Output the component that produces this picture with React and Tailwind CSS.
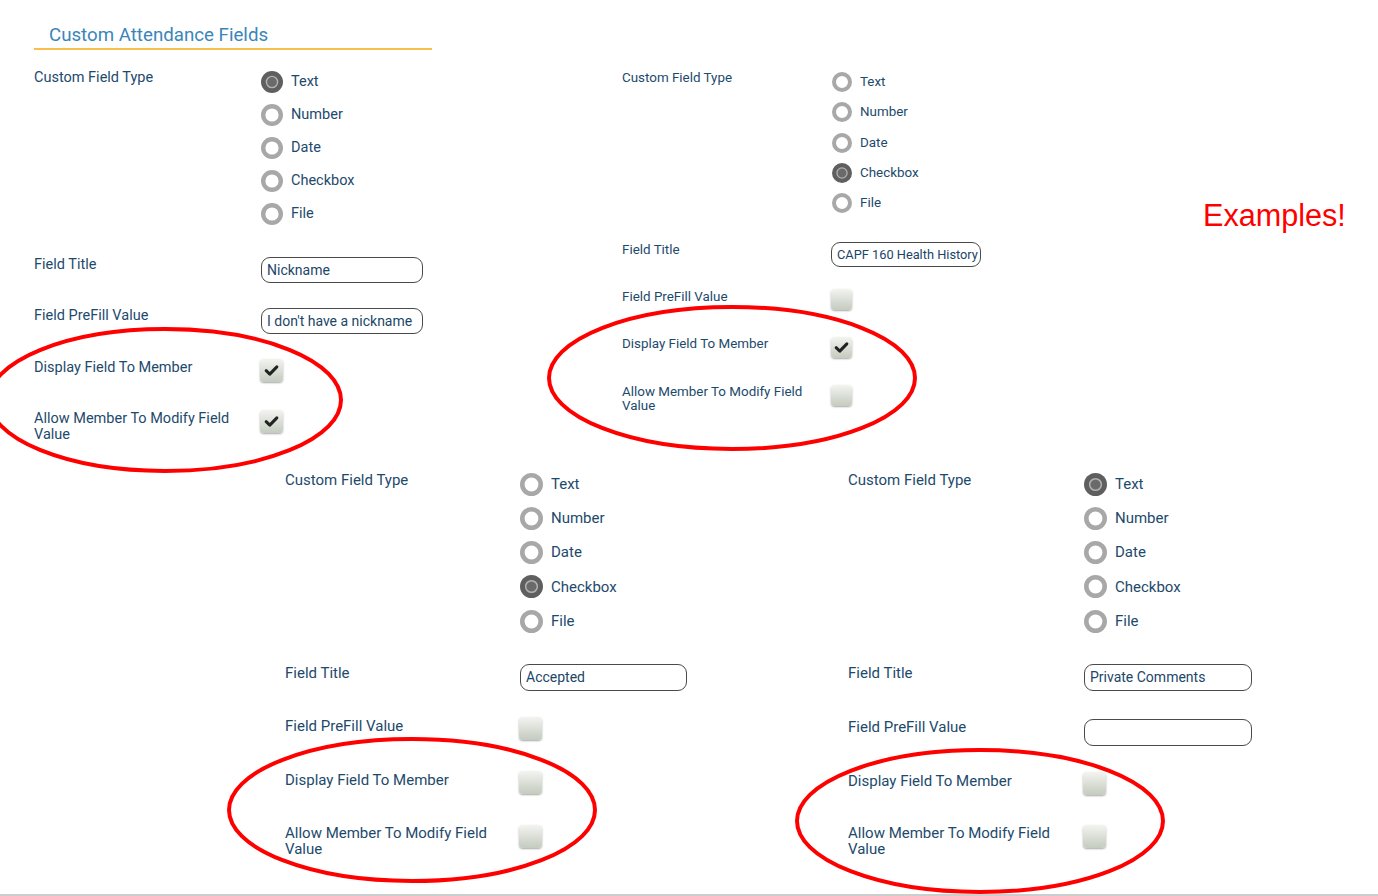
import React from "react";

const LABEL = "text-[#1d4a6c]";

const Radio = ({ checked, size }) => (
  <svg width={size} height={size} viewBox="0 0 22 22" className="shrink-0">
    {checked ? (
      <>
        <circle cx="11" cy="11" r="11" fill="#5f5f5f" />
        <circle cx="11" cy="11" r="5.6" fill="#6a6a6a" stroke="#b3b3b3" strokeWidth="1.4" />
      </>
    ) : (
      <circle cx="11" cy="11" r="8.8" fill="#fff" stroke="#a8a8a8" strokeWidth="4.4" />
    )}
  </svg>
);

const Check = ({ checked, cls }) => (
  <div
    className={`${cls} shrink-0 rounded-[4px] bg-linear-to-b from-[#f3f4f0] to-[#c4cbbf] shadow-[0_1px_2px_rgba(0,0,0,0.35)] flex items-center justify-center`}
  >
    {checked && (
      <svg width="15" height="13" viewBox="0 0 14 12">
        <path d="M2 6.2 L5.4 9.4 L12 2.6" fill="none" stroke="#222" strokeWidth="2.8" strokeLinecap="round" strokeLinejoin="round" />
      </svg>
    )}
  </div>
);

const Input = ({ value, cls }) => (
  <div
    className={`${cls} border-[1.5px] border-[#4a4a4a] rounded-[9px] bg-white px-[5px] flex items-center overflow-hidden whitespace-nowrap text-[#1b4668]`}
  >
    {value}
  </div>
);

const Radios = ({ selected, size, rowCls, textCls }) => (
  <div className="flex flex-col">
    {["Text", "Number", "Date", "Checkbox", "File"].map((o) => (
      <div key={o} className={`${rowCls} flex items-center gap-2`}>
        <Radio checked={o === selected} size={size} />
        <span className={`${textCls} ${LABEL}`}>{o}</span>
      </div>
    ))}
  </div>
);

const App = () => {
  return (
    <div className="relative w-[1378px] h-[896px] overflow-hidden bg-white border-b-2 border-[#cdcdcd] font-['Roboto',sans-serif]">
      {/* top row */}
      <div className="flex h-[466px]">
        {/* panel A */}
        <div className="ml-[34px] w-[588px] flex flex-col">
          <div className="w-[398px] pt-[24px] pb-[2px] pl-[15px] border-b-2 border-[#fbbd4b] text-[18.7px] leading-[22px] text-[#3a86b9]">
            Custom Attendance Fields
          </div>
          <div className="flex mt-[14px]">
            <div className={`w-[227px] pt-[5px] text-[14.5px] leading-[18px] ${LABEL}`}>Custom Field Type</div>
            <div className="pt-[1px]">
              <Radios selected="Text" size={22} rowCls="h-[33px]" textCls="text-[14.5px]" />
            </div>
          </div>
          <div className="flex mt-[26px] h-[51px]">
            <div className={`w-[227px] text-[14.5px] leading-[18px] ${LABEL}`}>Field Title</div>
            <Input value="Nickname" cls="mt-[1px] h-[26px] w-[162px] text-[14px]" />
          </div>
          <div className="flex h-[52px]">
            <div className={`w-[227px] text-[14.5px] leading-[18px] ${LABEL}`}>Field PreFill Value</div>
            <Input value="I don't have a nickname" cls="mt-[1px] h-[26px] w-[162px] text-[14px]" />
          </div>
          <div className="flex h-[51px]">
            <div className={`w-[227px] text-[14.5px] leading-[18px] ${LABEL}`}>Display Field To Member</div>
            <Check checked cls="-ml-[1px] w-[23px] h-[23px]" />
          </div>
          <div className="flex">
            <div className={`w-[227px] pt-[1px] text-[14.5px] leading-[16px] ${LABEL}`}>
              Allow Member To Modify Field
              <br />
              Value
            </div>
            <Check checked cls="-ml-[1px] w-[23px] h-[23px]" />
          </div>
        </div>

        {/* panel B */}
        <div className="pt-[66px] flex flex-col">
          <div className="flex">
            <div className={`w-[209px] pt-[4px] text-[13.4px] leading-[16px] ${LABEL}`}>Custom Field Type</div>
            <div className="ml-[1px] pt-[1px]">
              <Radios selected="Checkbox" size={20} rowCls="h-[30.25px]" textCls="text-[13.4px]" />
            </div>
          </div>
          <div className="flex mt-[24px] h-[47px]">
            <div className={`w-[209px] text-[13.4px] leading-[16px] ${LABEL}`}>Field Title</div>
            <Input value="CAPF 160 Health History" cls="h-[25px] w-[150px] text-[12.8px]" />
          </div>
          <div className="flex h-[47px]">
            <div className={`w-[209px] text-[13.4px] leading-[16px] ${LABEL}`}>Field PreFill Value</div>
            <Check cls="w-[21px] h-[21px]" />
          </div>
          <div className="flex h-[49px]">
            <div className={`w-[209px] text-[13.4px] leading-[16px] ${LABEL}`}>Display Field To Member</div>
            <Check checked cls="mt-[1px] w-[21px] h-[21px]" />
          </div>
          <div className="flex">
            <div className={`w-[209px] text-[13.4px] leading-[14px] ${LABEL}`}>
              Allow Member To Modify Field
              <br />
              Value
            </div>
            <Check cls="w-[21px] h-[21px]" />
          </div>
        </div>
      </div>

      {/* bottom row */}
      <div className="flex">
        {/* panel C */}
        <div className="ml-[285px] w-[563px] flex flex-col">
          <div className="flex">
            <div className={`w-[235px] pt-[5px] text-[15px] leading-[18px] ${LABEL}`}>Custom Field Type</div>
            <div className="pt-[1px]">
              <Radios selected="Checkbox" size={23} rowCls="h-[34.25px]" textCls="text-[15px]" />
            </div>
          </div>
          <div className="flex mt-[26px] h-[53px]">
            <div className={`w-[235px] text-[15px] leading-[18px] ${LABEL}`}>Field Title</div>
            <Input value="Accepted" cls="h-[27px] w-[167px] text-[14px]" />
          </div>
          <div className="flex h-[54px]">
            <div className={`w-[235px] text-[15px] leading-[18px] ${LABEL}`}>Field PreFill Value</div>
            <Check cls="-ml-[1px] w-[23px] h-[23px]" />
          </div>
          <div className="flex h-[54px]">
            <div className={`w-[235px] text-[15px] leading-[18px] ${LABEL}`}>Display Field To Member</div>
            <Check cls="-ml-[1px] w-[23px] h-[23px]" />
          </div>
          <div className="flex">
            <div className={`w-[235px] text-[15px] leading-[16px] ${LABEL}`}>
              Allow Member To Modify Field
              <br />
              Value
            </div>
            <Check cls="-ml-[1px] w-[23px] h-[23px]" />
          </div>
        </div>

        {/* panel D */}
        <div className="flex flex-col">
          <div className="flex">
            <div className={`w-[236px] pt-[5px] text-[15px] leading-[18px] ${LABEL}`}>Custom Field Type</div>
            <div className="pt-[1px]">
              <Radios selected="Text" size={23} rowCls="h-[34.25px]" textCls="text-[15px]" />
            </div>
          </div>
          <div className="flex mt-[26px] h-[54px]">
            <div className={`w-[236px] text-[15px] leading-[18px] ${LABEL}`}>Field Title</div>
            <Input value="Private Comments" cls="h-[27px] w-[168px] text-[14px]" />
          </div>
          <div className="flex h-[54px]">
            <div className={`w-[236px] text-[15px] leading-[18px] ${LABEL}`}>Field PreFill Value</div>
            <Input value="" cls="mt-[1px] h-[27px] w-[168px] text-[14px]" />
          </div>
          <div className="flex h-[53px]">
            <div className={`w-[236px] text-[15px] leading-[18px] ${LABEL}`}>Display Field To Member</div>
            <Check cls="-ml-[1px] w-[23px] h-[23px]" />
          </div>
          <div className="flex">
            <div className={`w-[236px] text-[15px] leading-[16px] ${LABEL}`}>
              Allow Member To Modify Field
              <br />
              Value
            </div>
            <Check cls="-ml-[1px] w-[23px] h-[23px]" />
          </div>
        </div>
      </div>

      {/* annotations */}
      <svg className="absolute inset-0 pointer-events-none" width="1378" height="896">
        <ellipse cx="165" cy="400" rx="176" ry="71" fill="none" stroke="#f00" strokeWidth="4" />
        <ellipse cx="732" cy="378" rx="183" ry="71" fill="none" stroke="#f00" strokeWidth="4" />
        <ellipse cx="412" cy="810" rx="183" ry="71" fill="none" stroke="#f00" strokeWidth="4" />
        <ellipse cx="980" cy="821" rx="183" ry="71" fill="none" stroke="#f00" strokeWidth="4" />
      </svg>
      <div className="absolute left-[1203px] top-[200px] text-[30.6px] leading-none text-[#ff0000] font-['Liberation_Sans',Arial,sans-serif]">
        Examples!
      </div>
    </div>
  );
};

export default App;
